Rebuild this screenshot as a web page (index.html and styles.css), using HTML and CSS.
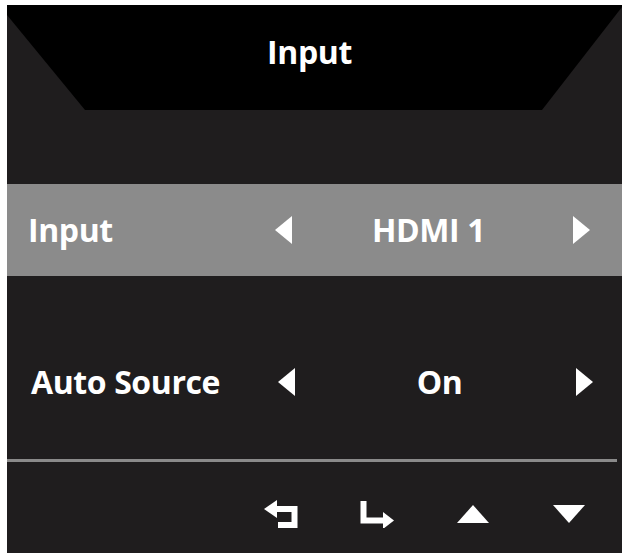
FILE: index.html
```html
<!DOCTYPE html>
<html lang="en">
<head>
<meta charset="utf-8">
<title>Input</title>
<link rel="stylesheet" href="styles.css">
</head>
<body>
<div class="osd">
  <div class="osd-header"><h1 class="osd-title">Input</h1></div>
  <div class="osd-body">
    <div class="osd-row osd-row--active">
      <span class="osd-label">Input</span>
      <svg class="osd-arrow" viewBox="0 0 17 28"><polygon points="17,0 17,28 0,14"/></svg>
      <span class="osd-value">HDMI 1</span>
      <svg class="osd-arrow" viewBox="0 0 17 28"><polygon points="0,0 0,28 17,14"/></svg>
    </div>
    <div class="osd-row osd-row--second">
      <span class="osd-label">Auto Source</span>
      <svg class="osd-arrow" viewBox="0 0 17 28"><polygon points="17,0 17,28 0,14"/></svg>
      <span class="osd-value">On</span>
      <svg class="osd-arrow" viewBox="0 0 17 28"><polygon points="0,0 0,28 17,14"/></svg>
    </div>
  </div>
  <div class="osd-footer">
    <svg class="osd-key" viewBox="0 0 34 28"><polygon points="0,9 13,0 13,18"/><path d="M12 9 H30.5 V25 H14" /></svg>
    <svg class="osd-key" viewBox="0 0 34 28"><path d="M3.5 1 V20.5 H24"/><polygon points="34,20.5 23,12 23,29"/></svg>
    <svg class="osd-key" viewBox="0 0 34 28"><polygon points="17,5 33,23 1,23"/></svg>
    <svg class="osd-key" viewBox="0 0 34 28"><polygon points="1,5 33,5 17,23"/></svg>
  </div>
</div>
</body>
</html>
```

FILE: styles.css
```css
* { box-sizing: border-box; }
html, body { margin: 0; padding: 0; background: #ffffff; }
body { font-family: "Open Sans", "Liberation Sans", sans-serif; }

.osd {
  margin: 5px 4px 0 7px;
  width: 615px;
  height: 548px;
  background: #1f1d1e;
  display: flex;
  flex-direction: column;
  color: #ffffff;
}

.osd-header {
  height: 105px;
  background: #000000;
  clip-path: polygon(0 0, 100% 0, 100% 2px, 535px 100%, 78px 100%, 0 10px);
  display: flex;
  justify-content: center;
  padding-top: 25px;
  padding-right: 10px;
}

.osd-title {
  margin: 0;
  font-size: 32px;
  font-weight: 700;
  line-height: 44px;
  letter-spacing: -0.4px;
}

.osd-body {
  padding-top: 74px;
  display: flex;
  flex-direction: column;
}

.osd-row {
  display: grid;
  grid-template-columns: 247px 17px 281px 18px;
  align-items: center;
  height: 92px;
  padding-left: 21px;
}

.osd-row--active { background: #8b8b8b; }
.osd-row--second { margin-top: 60px; padding-left: 24px; }

.osd-label, .osd-value {
  font-size: 32px;
  font-weight: 700;
  letter-spacing: -0.4px;
  line-height: 44px;
}

.osd-value { text-align: center; }
.osd-row--active .osd-value { padding-right: 8px; }
.osd-row--second .osd-value { padding-left: 8px; }

.osd-arrow {
  width: 17px;
  height: 28px;
  fill: #ffffff;
}

.osd-footer {
  margin-top: 31px;
  border-top: 3px solid #8a8a8a;
  margin-right: 5px;
  display: flex;
  justify-content: flex-end;
  gap: 62px;
  padding-top: 38px;
  padding-right: 31px;
}

.osd-key {
  width: 34px;
  height: 28px;
  fill: #ffffff;
  stroke: #ffffff;
}
.osd-key polygon { stroke: none; }
.osd-key path { fill: none; stroke-width: 6; stroke-linejoin: miter; }
```
